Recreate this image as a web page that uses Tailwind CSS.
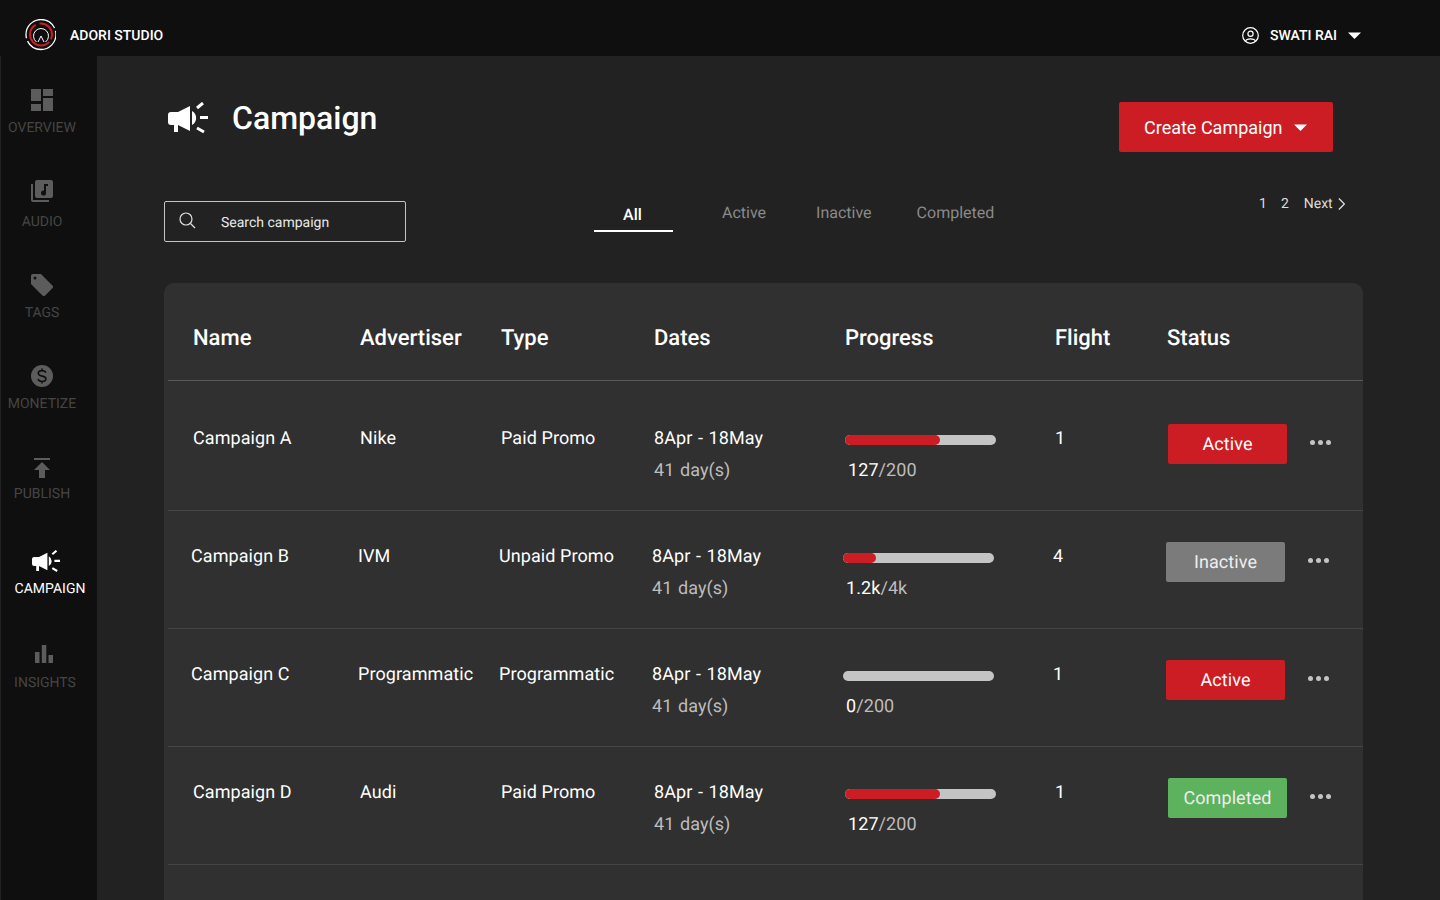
<!DOCTYPE html>
<html lang="en">
<head>
  <meta charset="UTF-8">
  <title>Adori Studio - Campaign</title>
  <script src="https://cdn.jsdelivr.net/npm/@tailwindcss/browser@4"></script>
</head>
<body class="bg-[#222222] font-['Roboto',sans-serif] text-white overflow-hidden antialiased [text-rendering:geometricPrecision]">
<div class="h-[900px] w-[1440px] flex flex-col overflow-hidden">
  <!-- Header -->
  <header class="h-14 shrink-0 bg-[#0f0f0f] flex items-center pl-6 pt-[14px] relative">
    <svg class="w-8 h-8" viewBox="0 0 32 32" fill="none">
      <circle cx="17" cy="15.500" r="15" stroke="#fff" stroke-width="1.300" stroke-dasharray="40 3 44 3"/>
      <circle cx="17" cy="15.500" r="11" stroke="#cc1c24" stroke-width="2" stroke-dasharray="5 3 38 4 20 0"/>
      <path d="M12.500 23A7.500 7.500 0 1 1 21.500 23M14 23L17 17L20 23" stroke="#fff" stroke-width="1" stroke-linejoin="round"/>
    </svg>
    <span class="ml-[14px] text-[14px] font-medium mt-[2px]">ADORI STUDIO</span>
    <div class="absolute left-[1242px] top-[7px] h-14 flex items-center">
      <svg class="w-[17px] h-[17px]" viewBox="0 0 17 17" fill="none" stroke="#fff" stroke-width="1.200">
        <circle cx="8.500" cy="8.500" r="7.800"/>
        <circle cx="8.500" cy="6.800" r="2.600"/>
        <path d="M3.600 14 C4.500 11.200 12.500 11.200 13.400 14"/>
      </svg>
      <span class="ml-[11px] text-[14px] font-medium mt-[2px]">SWATI RAI</span>
      <svg class="ml-[11px] w-[13px] h-[7px]" viewBox="0 0 13 7" fill="#fff"><path d="M0 0.500h13L6.500 7z"/></svg>
    </div>
  </header>

  <div class="flex flex-1 min-h-0">
    <!-- Sidebar -->
    <aside class="w-[97px] shrink-0 bg-[#0f0f0f] border-l border-[#222222] relative text-[14px] text-[#454545]">
      <div class="flex flex-col">
        <div class="h-[91px] pt-[33px] flex flex-col items-center pr-[14px]">
          <svg class="w-[22px] h-[22px]" viewBox="0 0 22 22" fill="#5c5c5c"><path d="M0 0h10v12H0zM12 0h10v7H12zM12 9h10v13H12zM0 15h10v7H0z"/></svg>
          <span class="mt-[7px] leading-[20px]">OVERVIEW</span>
        </div>
        <div class="h-[92px] pt-[33px] flex flex-col items-center pr-[14px]">
          <svg class="w-[22px] h-[22px]" viewBox="0 0 22 22" fill="#5c5c5c"><path d="M0 4h2v16h16v2H2a2 2 0 0 1-2-2z"/><path fill-rule="evenodd" d="M6 0h14a2 2 0 0 1 2 2v14a2 2 0 0 1-2 2H6a2 2 0 0 1-2-2V2a2 2 0 0 1 2-2zm11 4h-4v6.500a2.500 2.500 0 1 0 2 2.400V6h2z"/></svg>
          <span class="mt-[10px] leading-[20px]">AUDIO</span>
        </div>
        <div class="h-[91px] pt-[35px] flex flex-col items-center pr-[14px]">
          <svg class="w-[22px] h-[22px]" viewBox="0 0 22 22" fill="#5c5c5c"><path fill-rule="evenodd" d="M2 0h8l11.400 11.400a2 2 0 0 1 0 2.800l-7.200 7.200a2 2 0 0 1-2.800 0L0 10V2a2 2 0 0 1 2-2zm2 2.500a1.500 1.500 0 1 0 0 3 1.500 1.500 0 0 0 0-3z"/></svg>
          <span class="mt-[7px] leading-[20px]">TAGS</span>
        </div>
        <div class="h-[92px] pt-[35px] flex flex-col items-center pr-[14px]">
          <svg class="w-[22px] h-[22px]" viewBox="0 0 22 22"><circle cx="11" cy="11" r="11" fill="#5c5c5c"/><path d="M14.800 7.600C14.200 6 12.800 5.600 11 5.600c-2.200 0-3.700 1-3.700 2.700 0 3.800 7.600 1.800 7.600 5.500 0 1.700-1.600 2.700-3.900 2.700-2 0-3.500-.7-4-2.400M11 3.600v2M11 16.400v2" fill="none" stroke="#0f0f0f" stroke-width="1.600"/></svg>
          <span class="mt-[7px] leading-[20px]">MONETIZE</span>
        </div>
        <div class="h-[92px] pt-[36px] flex flex-col items-center pr-[14px]">
          <svg class="w-[18px] h-[20px]" viewBox="0 0 18 20" fill="#5c5c5c"><path d="M1 0h16v2H1zM9 4l8 8h-5v8H6v-8H1z"/></svg>
          <span class="mt-[6px] leading-[20px]">PUBLISH</span>
        </div>
        <div class="h-[93px] pt-[36px] flex flex-col items-center text-white pl-[2px]">
          <svg class="w-[28px] h-[22.400px] mr-[8px]" viewBox="0 0 40 32" fill="#fff"><path d="M3 10H10L22 4V29L10 23H3a3 3 0 0 1-3-3V13a3 3 0 0 1 3-3zM6 23h4v7H6zM24 9a8 8 0 0 1 0 14z"/><path d="M29 6l6-5M32 15.500h8M29 26l7 4" stroke="#fff" stroke-width="3" fill="none"/></svg>
          <span class="mt-[7px] leading-[20px]">CAMPAIGN</span>
        </div>
        <div class="pt-[38px] flex flex-col items-center pr-[8px]">
          <svg class="w-[18px] h-[18px] mr-[3px]" viewBox="0 0 18 18" fill="#5c5c5c"><path d="M0 7h4.500v11H0zM6.800 0h4.500v18H6.800zM13.500 10H18v8h-4.500z"/></svg>
          <span class="mt-[10px] leading-[20px]">INSIGHTS</span>
        </div>
      </div>
    </aside>

    <!-- Main -->
    <main class="flex-1 min-w-0 pl-[67px] pr-[77px] relative">
      <!-- Title row -->
      <div class="h-[145px] flex items-start">
        <svg class="mt-[46px] ml-[4px] w-[40px] h-[32px]" viewBox="0 0 40 32" fill="#fff"><path d="M3 10H10L22 4V29L10 23H3a3 3 0 0 1-3-3V13a3 3 0 0 1 3-3zM6 23h4v7H6zM24 9a8 8 0 0 1 0 14z"/><path d="M29 6l6-5M32 15.500h8M29 26l7 4" stroke="#fff" stroke-width="3" fill="none"/></svg>
        <h1 class="ml-[24px] mt-[41px] text-[32px] leading-[42px] font-medium">Campaign</h1>
        <button class="ml-auto mt-[46px] mr-[30px] w-[214px] h-[50px] bg-[#cc1c24] rounded-[2px] flex items-center pl-[25px] text-[18px]">
          Create Campaign
          <svg class="ml-[11px] w-[13px] h-[7px]" viewBox="0 0 13 7" fill="#fff"><path d="M0 0.500h13L6.500 7z"/></svg>
        </button>
      </div>

      <!-- Search and tabs -->
      <div class="h-[82px] relative flex items-start">
        <label class="w-[242px] h-[41px] border border-[#c4c4c4] rounded-[2px] flex items-center pl-[14px] text-[14px] text-[#e8e8e8]">
          <svg class="w-[17px] h-[17px] mt-[-3px]" viewBox="0 0 17 17" fill="none" stroke="#e0e0e0" stroke-width="1.200"><circle cx="7" cy="7" r="6"/><path d="M11.500 11.500L16 16"/></svg>
          <span class="ml-[25px] mt-[3px]">Search campaign</span>
        </label>
        <nav class="ml-[188px] flex items-start text-[16px] text-[#8a8a8a]">
          <a class="w-[79px] h-[31px] border-b-2 border-white text-center text-white font-medium leading-[28px] pr-[2px]">All</a>
          <a class="ml-[49px] leading-[23px]">Active</a>
          <a class="ml-[50px] leading-[23px]">Inactive</a>
          <a class="ml-[45px] leading-[23px]">Completed</a>
        </nav>
        <div class="ml-auto mr-[18px] -mt-[7px] w-[86px] flex items-center text-[14px] text-[#dddddd]">
          <span>1</span>
          <span class="ml-[14px]">2</span>
          <span class="ml-[15px]">Next</span>
          <svg class="ml-[5px] mb-[2px] w-[8px] h-[14px]" viewBox="0 0 8 14" fill="none" stroke="#e0e0e0" stroke-width="1.400"><path d="M1 1l6 6-6 6"/></svg>
        </div>
      </div>

      <!-- Table -->
      <section class="w-[1199px] h-[640px] bg-[#303030] rounded-t-[10px] pl-1">
        <div class="h-[98px] border-b border-[#5a5a5a] grid grid-cols-[167px_141px_153px_191px_210px_112px_1fr] pl-[25px] pt-[41px] text-[22px] font-medium leading-[30px]">
          <div>Name</div><div>Advertiser</div><div>Type</div><div>Dates</div><div>Progress</div><div>Flight</div><div>Status</div>
        </div>

        <!-- Row A -->
        <div class="h-[130px] border-b border-[#454545] grid grid-cols-[167px_141px_153px_191px_210px_113px_1fr] pl-[25px] pt-[46px] text-[18px] leading-[24px] tracking-[0.08px]">
          <div>Campaign A</div><div>Nike</div><div>Paid Promo</div>
          <div class="[word-spacing:1px]">8Apr - 18May<div class="mt-[8px] text-[#bdbdbd]">41 day(s)</div></div>
          <div class="pt-[8px]">
            <div class="w-[151px] h-[10px] rounded-full bg-[#c4c4c4] overflow-hidden"><div class="h-full rounded-full bg-[#cc1c24]" style="width:63%"></div></div>
            <div class="mt-[14px] ml-[3px]">127<span class="text-[#bdbdbd]">/200</span></div>
          </div>
          <div>1</div>
          <div class="flex items-start -mt-[3px]">
            <div class="w-[119px] h-[40px] pt-[2px] bg-[#cc1c24] rounded-[2px] flex items-center justify-center">Active</div>
            <div class="ml-[23px] mt-[16px] flex gap-[3px]"><i class="size-[5px] rounded-full bg-[#c4c4c4]"></i><i class="size-[5px] rounded-full bg-[#c4c4c4]"></i><i class="size-[5px] rounded-full bg-[#c4c4c4]"></i></div>
          </div>
        </div>

        <!-- Row B -->
        <div class="h-[118px] border-b border-[#454545] grid grid-cols-[167px_141px_153px_191px_210px_113px_1fr] pl-[23px] pt-[34px] text-[18px] leading-[24px] tracking-[0.08px]">
          <div>Campaign B</div><div>IVM</div><div>Unpaid Promo</div>
          <div class="[word-spacing:1px]">8Apr - 18May<div class="mt-[8px] text-[#bdbdbd]">41 day(s)</div></div>
          <div class="pt-[8px]">
            <div class="w-[151px] h-[10px] rounded-full bg-[#c4c4c4] overflow-hidden"><div class="h-full rounded-full bg-[#cc1c24]" style="width:22%"></div></div>
            <div class="mt-[14px] ml-[3px]">1.2k<span class="text-[#bdbdbd]">/4k</span></div>
          </div>
          <div>4</div>
          <div class="flex items-start -mt-[3px]">
            <div class="w-[119px] h-[40px] pt-[2px] bg-[#7b7b7b] rounded-[2px] flex items-center justify-center text-[#eeeeee]">Inactive</div>
            <div class="ml-[23px] mt-[16px] flex gap-[3px]"><i class="size-[5px] rounded-full bg-[#c4c4c4]"></i><i class="size-[5px] rounded-full bg-[#c4c4c4]"></i><i class="size-[5px] rounded-full bg-[#c4c4c4]"></i></div>
          </div>
        </div>

        <!-- Row C -->
        <div class="h-[118px] border-b border-[#454545] grid grid-cols-[167px_141px_153px_191px_210px_113px_1fr] pl-[23px] pt-[34px] text-[18px] leading-[24px] tracking-[0.08px]">
          <div>Campaign C</div><div>Programmatic</div><div>Programmatic</div>
          <div class="[word-spacing:1px]">8Apr - 18May<div class="mt-[8px] text-[#bdbdbd]">41 day(s)</div></div>
          <div class="pt-[8px]">
            <div class="w-[151px] h-[10px] rounded-full bg-[#c4c4c4]"></div>
            <div class="mt-[14px] ml-[3px]">0<span class="text-[#bdbdbd]">/200</span></div>
          </div>
          <div>1</div>
          <div class="flex items-start -mt-[3px]">
            <div class="w-[119px] h-[40px] pt-[2px] bg-[#cc1c24] rounded-[2px] flex items-center justify-center">Active</div>
            <div class="ml-[23px] mt-[16px] flex gap-[3px]"><i class="size-[5px] rounded-full bg-[#c4c4c4]"></i><i class="size-[5px] rounded-full bg-[#c4c4c4]"></i><i class="size-[5px] rounded-full bg-[#c4c4c4]"></i></div>
          </div>
        </div>

        <!-- Row D -->
        <div class="h-[118px] border-b border-[#454545] grid grid-cols-[167px_141px_153px_191px_210px_113px_1fr] pl-[25px] pt-[34px] text-[18px] leading-[24px] tracking-[0.08px]">
          <div>Campaign D</div><div>Audi</div><div>Paid Promo</div>
          <div class="[word-spacing:1px]">8Apr - 18May<div class="mt-[8px] text-[#bdbdbd]">41 day(s)</div></div>
          <div class="pt-[8px]">
            <div class="w-[151px] h-[10px] rounded-full bg-[#c4c4c4] overflow-hidden"><div class="h-full rounded-full bg-[#cc1c24]" style="width:63%"></div></div>
            <div class="mt-[14px] ml-[3px]">127<span class="text-[#bdbdbd]">/200</span></div>
          </div>
          <div>1</div>
          <div class="flex items-start -mt-[3px]">
            <div class="w-[119px] h-[40px] pt-[2px] bg-[#5cb25d] rounded-[2px] flex items-center justify-center text-[#eeeeee]">Completed</div>
            <div class="ml-[23px] mt-[16px] flex gap-[3px]"><i class="size-[5px] rounded-full bg-[#c4c4c4]"></i><i class="size-[5px] rounded-full bg-[#c4c4c4]"></i><i class="size-[5px] rounded-full bg-[#c4c4c4]"></i></div>
          </div>
        </div>
      </section>
    </main>
  </div>
</div>
</body>
</html>
